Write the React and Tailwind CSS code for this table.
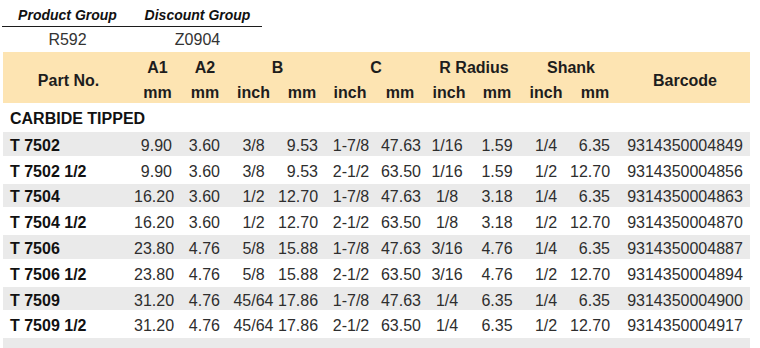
const rows = [
  ['T 7502', '9.90', '3.60', '3/8', '9.53', '1-7/8', '47.63', '1/16', '1.59', '1/4', '6.35', '9314350004849'],
  ['T 7502 1/2', '9.90', '3.60', '3/8', '9.53', '2-1/2', '63.50', '1/16', '1.59', '1/2', '12.70', '9314350004856'],
  ['T 7504', '16.20', '3.60', '1/2', '12.70', '1-7/8', '47.63', '1/8', '3.18', '1/4', '6.35', '9314350004863'],
  ['T 7504 1/2', '16.20', '3.60', '1/2', '12.70', '2-1/2', '63.50', '1/8', '3.18', '1/2', '12.70', '9314350004870'],
  ['T 7506', '23.80', '4.76', '5/8', '15.88', '1-7/8', '47.63', '3/16', '4.76', '1/4', '6.35', '9314350004887'],
  ['T 7506 1/2', '23.80', '4.76', '5/8', '15.88', '2-1/2', '63.50', '3/16', '4.76', '1/2', '12.70', '9314350004894'],
  ['T 7509', '31.20', '4.76', '45/64', '17.86', '1-7/8', '47.63', '1/4', '6.35', '1/4', '6.35', '9314350004900'],
  ['T 7509 1/2', '31.20', '4.76', '45/64', '17.86', '2-1/2', '63.50', '1/4', '6.35', '1/2', '12.70', '9314350004917'],
]

// cell classes per column, same widths in header and body
const cellCls = [
  'w-[131px] pl-[7px] text-left font-bold text-[#111]',
  'w-[47px] pr-[9px] text-right',
  'w-[48px] pr-[9px] text-right',
  'w-[49px] text-center',
  'w-[48px] pr-[8px] text-right',
  'w-[48px] pl-[2px] text-center',
  'w-[52px] pr-[5px] text-right',
  'w-[46px] pr-[4px] text-center',
  'w-[50px] text-center',
  'w-[48px] text-center',
  'w-[50px] pr-[10px] text-right',
  'w-[130px] text-center',
]

const units = [
  ['w-[47px]', 'mm'],
  ['w-[48px]', 'mm'],
  ['w-[49px]', 'inch'],
  ['w-[48px]', 'mm'],
  ['w-[48px]', 'inch'],
  ['w-[52px]', 'mm'],
  ['w-[46px]', 'inch'],
  ['w-[50px]', 'mm'],
  ['w-[48px]', 'inch'],
  ['w-[50px]', 'mm'],
]

function DataRow({ cells, shaded }) {
  return (
    <div className={`flex h-[23.5px] items-center pt-[4px] ${shaded ? 'bg-[#eaeaea]' : 'bg-white'}`}>
      {cells.map((c, i) => (
        <div key={i} className={`shrink-0 whitespace-nowrap ${cellCls[i]}`}>
          {c}
        </div>
      ))}
    </div>
  )
}

export default function App() {
  return (
    <div className="w-[760px] h-[348px] overflow-hidden bg-white text-[16px] text-[#2e2e2e] font-['Liberation_Sans',Arial,sans-serif]">
      {/* group info */}
      <div className="ml-[2px] w-[260px]">
        <div className="flex h-[27px] border-b border-[#1c1c1c] pt-[5px] text-[14px] leading-[20px] font-bold italic text-[#111]">
          <div className="w-[131px] text-center">Product Group</div>
          <div className="w-[129px] text-center">Discount Group</div>
        </div>
        <div className="flex h-[25px] leading-[25px] text-[#333]">
          <div className="w-[131px] text-center">R592</div>
          <div className="w-[129px] text-center">Z0904</div>
        </div>
      </div>

      <div className="ml-[3px] w-[747px]">
        {/* header band */}
        <div className="flex h-[51px] bg-[#fde4b2] font-bold text-[#1d1d1d]">
          <div className="flex w-[131px] shrink-0 items-center justify-center pt-[6px]">Part No.</div>
          <div className="flex flex-col">
            <div className="flex h-[25.5px] items-center pt-[6px]">
              <div className="w-[47px] text-center">A1</div>
              <div className="w-[48px] text-center">A2</div>
              <div className="w-[97px] text-center">B</div>
              <div className="w-[100px] text-center">C</div>
              <div className="w-[96px] text-center">R Radius</div>
              <div className="w-[98px] text-center">Shank</div>
            </div>
            <div className="flex h-[25.5px] items-center pt-[5px]">
              {units.map(([w, u], i) => (
                <div key={i} className={`text-center ${w}`}>
                  {u}
                </div>
              ))}
            </div>
          </div>
          <div className="flex w-[130px] shrink-0 items-center justify-center pt-[6px]">Barcode</div>
        </div>

        {/* section title */}
        <div className="flex h-[29px] items-center pl-[7px] pt-[2px] font-bold text-[#111]">CARBIDE TIPPED</div>

        {/* body */}
        <div className="flex flex-col gap-[2.3px]">
          {rows.map((r, i) => (
            <DataRow key={r[0]} cells={r} shaded={i % 2 === 0} />
          ))}
          <div className="h-[23.5px] bg-[#eaeaea]" />
        </div>
      </div>
    </div>
  )
}
